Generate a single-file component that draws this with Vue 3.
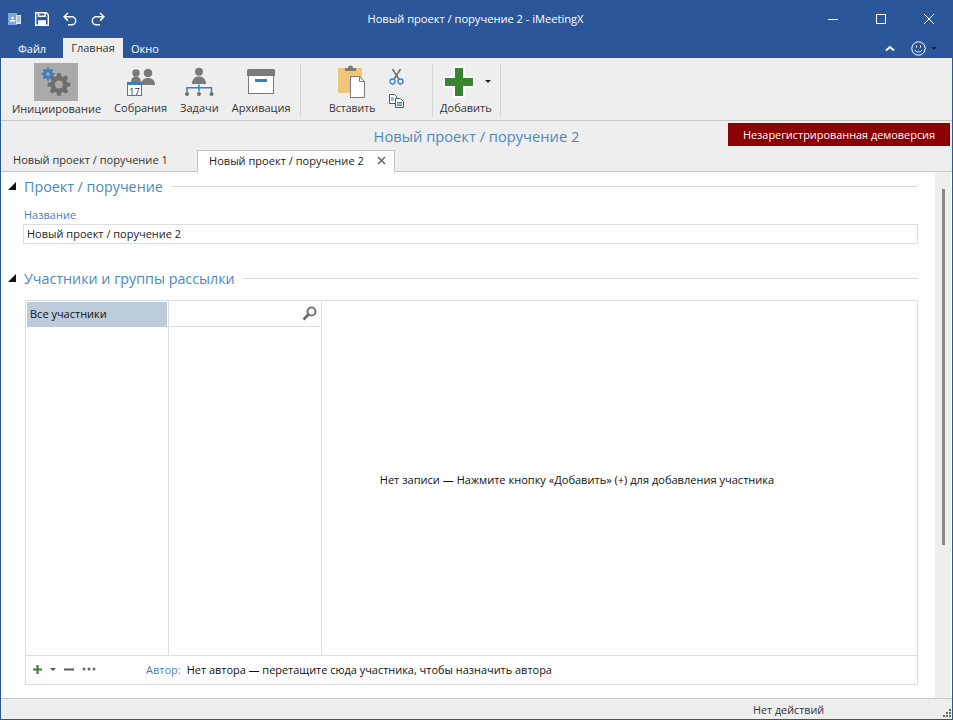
<script setup>
// Шестерёнка для кнопки «Инициирование»
const gear = (cx, cy, outer, inner, hole, teeth) => {
  let d = '';
  const step = (Math.PI * 2) / teeth;
  for (let i = 0; i < teeth; i++) {
    const a = i * step;
    const pts = [
      [inner, a - step * 0.36],
      [outer, a - step * 0.2],
      [outer, a + step * 0.2],
      [inner, a + step * 0.36],
    ];
    pts.forEach(([r, t], j) => {
      const x = (cx + r * Math.cos(t)).toFixed(2);
      const y = (cy + r * Math.sin(t)).toFixed(2);
      d += `${i === 0 && j === 0 ? 'M' : 'L'}${x} ${y}`;
    });
  }
  d += `ZM${cx + hole} ${cy}A${hole} ${hole} 0 1 0 ${cx - hole} ${cy}A${hole} ${hole} 0 1 0 ${cx + hole} ${cy}Z`;
  return d;
};

const smallGear = gear(14, 11, 6.5, 4.6, 1.8, 8);
const bigGear = gear(25, 21.5, 11.5, 8.5, 4, 8);
</script>

<template>
  <div class="window">
    <header class="titlebar">
      <div class="quick">
        <svg class="app-icon" width="13" height="14" viewBox="0 0 13 14">
          <rect x="0" y="1" width="9" height="12" fill="#7fa6d6" />
          <rect x="8" y="3" width="5" height="9" fill="#dfe7f2" />
          <circle cx="4.500" cy="6" r="1.200" fill="#fff" />
          <rect x="2" y="8" width="5" height="1.600" fill="#fff" />
          <path d="M9 5h3M9 7h3M9 9h3" stroke="#7f9cc4" />
        </svg>
        <svg width="14" height="14" viewBox="0 0 14 14" fill="none" stroke="#fff" stroke-width="1.400">
          <path d="M.7.7h10.600l2 2v10.600H.7z" />
          <path d="M3.500 .7v3.600h6.500V.7" />
          <path d="M3 13.300V8.200h8v5.100" fill="#fff" stroke="none" />
        </svg>
        <svg width="14" height="14" viewBox="0 0 14 14" fill="none" stroke="#fff" stroke-width="1.500">
          <path d="M5 1 1.100 4.800 5 8.600" />
          <path d="M1.300 4.800h7.400a4 4 0 0 1 0 8H5" />
        </svg>
        <svg width="14" height="14" viewBox="0 0 14 14" fill="none" stroke="#fff" stroke-width="1.500">
          <path d="m9 1 3.900 3.800L9 8.600" />
          <path d="M12.700 4.800H5.300a4 4 0 0 0 0 8H9" />
        </svg>
      </div>
      <div class="title">Новый проект / поручение 2 - iMeetingX</div>
      <div class="win-controls">
        <svg width="10" height="10" viewBox="0 0 10 10"><path d="M0 5.500h10" stroke="#fff" /></svg>
        <svg width="10" height="10" viewBox="0 0 10 10"><rect x=".5" y=".5" width="9" height="9" fill="none" stroke="#fff" /></svg>
        <svg width="10" height="10" viewBox="0 0 10 10"><path d="m0 0 10 10M10 0 0 10" stroke="#fff" /></svg>
      </div>
    </header>

    <nav class="menubar">
      <span class="menu-item file">Файл</span>
      <span class="menu-item active">Главная</span>
      <span class="menu-item">Окно</span>
      <div class="menu-right">
        <svg width="10" height="7" viewBox="0 0 10 7"><path d="M1 5.500 5 2l4 3.500" fill="none" stroke="#fff" stroke-width="2" /></svg>
        <svg class="smile" width="15" height="15" viewBox="0 0 15 15" fill="none" stroke="#fff">
          <circle cx="7.500" cy="7.500" r="6.700" />
          <path d="M4 9c1 2.600 6 2.600 7 0" />
          <path d="M5.500 4.500v2M9.500 4.500v2" />
        </svg>
        <i class="caret dark"></i>
      </div>
    </nav>

    <section class="ribbon">
      <div class="group first">
        <button class="rb selected">
          <span class="rb-icon hl">
            <svg width="44" height="38" viewBox="0 0 44 38">
              <path :d="smallGear" fill="#3f7cbd" fill-rule="evenodd" />
              <path :d="bigGear" fill="#6e6e6e" fill-rule="evenodd" />
            </svg>
          </span>
          <span class="rb-label">Инициирование</span>
        </button>
        <button class="rb">
          <span class="rb-icon">
            <svg width="34" height="32" viewBox="0 0 34 32">
              <circle cx="12" cy="7" r="3.700" fill="#7a7a7a" />
              <circle cx="24" cy="7" r="4.300" fill="#7a7a7a" />
              <path d="M7 17c0-5 2-6.500 5-6.500s5 1.500 5 6.500z" fill="#7a7a7a" />
              <path d="M17 19c0-5 3-7 7-7s7 2 7 7z" fill="#7a7a7a" />
              <rect x="3.500" y="16.500" width="14" height="13" fill="#fff" stroke="#3f7cbd" />
              <rect x="3" y="16" width="15" height="3" fill="#3f7cbd" />
              <text x="10.500" y="28.500" class="cal">17</text>
            </svg>
          </span>
          <span class="rb-label">Собрания</span>
        </button>
        <button class="rb">
          <span class="rb-icon">
            <svg width="30" height="32" viewBox="0 0 30 32">
              <circle cx="15" cy="5.700" r="4" fill="#7a7a7a" />
              <path d="M8 18c0-5 3-7.500 7-7.500s7 2.500 7 7.500z" fill="#7a7a7a" />
              <path d="M15 18.500v7M3 26v-4.300h24.500V26" fill="none" stroke="#3f7cbd" stroke-width="1.500" />
              <circle cx="3" cy="28" r="2" fill="#6e6e6e" />
              <circle cx="15" cy="28" r="2" fill="#6e6e6e" />
              <circle cx="27.500" cy="28" r="2" fill="#6e6e6e" />
            </svg>
          </span>
          <span class="rb-label">Задачи</span>
        </button>
        <button class="rb">
          <span class="rb-icon">
            <svg width="30" height="32" viewBox="0 0 30 32">
              <path d="M1 10V4.500Q1 3 2.500 3h25Q29 3 29 4.500V10z" fill="#7a7a7a" />
              <rect x="2.500" y="9.500" width="25" height="18" fill="#fff" stroke="#7a7a7a" />
              <rect x="9" y="13" width="12" height="3" fill="#3f7cbd" />
            </svg>
          </span>
          <span class="rb-label">Архивация</span>
        </button>
      </div>

      <div class="group second">
        <button class="rb">
          <span class="rb-icon">
            <svg width="30" height="34" viewBox="0 0 30 34">
              <rect x="1" y="3" width="24" height="25" rx="1.500" fill="#efc67a" />
              <path d="M8 6V3h3a2.500 2.500 0 0 1 5 0h3v3z" fill="#7a7a7a" />
              <path d="M13.500 11.500h9l5 5v16h-14z" fill="#fff" stroke="#7a7a7a" />
              <path d="M22.500 11.500v5h5" fill="none" stroke="#7a7a7a" />
            </svg>
          </span>
          <span class="rb-label paste">Вставить</span>
        </button>
        <div class="small-tools">
          <svg width="15" height="16" viewBox="0 0 15 16" fill="none">
            <path d="M3.500 0 9.800 10M11.500 0 5.200 10" stroke="#6e6e6e" stroke-width="1.600" />
            <circle cx="3.500" cy="12.500" r="2.500" stroke="#3f7cbd" stroke-width="1.300" />
            <circle cx="11.500" cy="12.500" r="2.500" stroke="#3f7cbd" stroke-width="1.300" />
          </svg>
          <svg width="15" height="14" viewBox="0 0 15 14">
            <path d="M.5.500h5l2 2v7h-7z" fill="#fff" stroke="#555" />
            <path d="M6.500 4.500h5l3 3v6h-8z" fill="#fff" stroke="#555" />
            <path d="M8 8.500h5M8 10h5M8 11.500h5M2 4h3M2 6h3" stroke="#3f7cbd" />
          </svg>
        </div>
      </div>

      <div class="group third">
        <button class="rb add">
          <span class="rb-icon">
            <svg width="32" height="32" viewBox="0 0 32 32">
              <path d="M11 1h10v10h10v10H21v10H11V21H1V11h10z" fill="#388433" stroke="#fff" stroke-width="2" />
            </svg>
            <i class="caret dark add-caret"></i>
          </span>
          <span class="rb-label">Добавить</span>
        </button>
      </div>
    </section>

    <div class="doc-band">
      <span class="doc-title">Новый проект / поручение 2</span>
      <span class="demo">Незарегистрированная демоверсия</span>
    </div>

    <div class="tabs">
      <span class="tab">Новый проект / поручение 1</span>
      <span class="tab current">
        Новый проект / поручение 2
        <svg width="9" height="9" viewBox="0 0 9 9"><path d="m1 1 7 7M8 1 1 8" stroke="#666" stroke-width="1.500" /></svg>
      </span>
    </div>

    <main class="content">
      <div class="form">
        <div class="section-head">
          <i class="tri"></i>
          <h2>Проект / поручение</h2>
          <span class="rule"></span>
        </div>
        <label class="field-label">Название</label>
        <div class="input">Новый проект / поручение 2</div>

        <div class="section-head second-head">
          <i class="tri"></i>
          <h2>Участники и группы рассылки</h2>
          <span class="rule"></span>
        </div>

        <div class="panel">
          <div class="panel-cols">
            <div class="col groups">
              <div class="group-item">Все участники</div>
            </div>
            <div class="col people">
              <div class="search">
                <svg width="15" height="15" viewBox="0 0 15 15" fill="none">
                  <circle cx="9.500" cy="5.500" r="4" stroke="#777" stroke-width="2.100" />
                  <path d="M6.500 8.500 1.500 13.500" stroke="#666" stroke-width="2.600" />
                </svg>
              </div>
            </div>
            <div class="col empty">Нет записи — Нажмите кнопку «Добавить» (+) для добавления участника</div>
          </div>
          <div class="panel-foot">
            <div class="foot-tools">
              <svg width="9" height="9" viewBox="0 0 9 9"><path d="M4.500 0v9M0 4.500h9" stroke="#388433" stroke-width="2.200" /></svg>
              <i class="caret gray"></i>
              <svg width="10" height="9" viewBox="0 0 10 9"><path d="M0 4.500h10" stroke="#555" stroke-width="2" /></svg>
              <svg class="dots" width="14" height="4" viewBox="0 0 14 4" fill="#666">
                <circle cx="2" cy="2" r="1.500" /><circle cx="7" cy="2" r="1.500" /><circle cx="12" cy="2" r="1.500" />
              </svg>
            </div>
            <span class="author-label">Автор:</span>
            <span class="author">Нет автора — перетащите сюда участника, чтобы назначить автора</span>
          </div>
        </div>
      </div>
      <div class="scrollbar"><span class="thumb"></span></div>
    </main>

    <footer class="status">
      <span>Нет действий</span>
      <svg class="grip" width="9" height="9" viewBox="0 0 9 9" fill="#666">
        <rect x="6" y="0" width="2" height="2" /><rect x="3" y="3" width="2" height="2" /><rect x="6" y="3" width="2" height="2" />
        <rect x="0" y="6" width="2" height="2" /><rect x="3" y="6" width="2" height="2" /><rect x="6" y="6" width="2" height="2" />
      </svg>
    </footer>
  </div>
</template>

<style>
html,
body {
  margin: 0;
  background: #2b579a;
}
</style>

<style scoped>
.window {
  width: 953px;
  height: 720px;
  box-sizing: border-box;
  display: flex;
  flex-direction: column;
  border: 1px solid #2b579a;
  border-top: 0;
  background: #fff;
  font-family: "Open Sans", "Noto Sans", sans-serif;
  font-size: 11px;
  color: #333;
  overflow: hidden;
}

.titlebar {
  height: 38px;
  background: #2b579a;
  display: flex;
  align-items: center;
  position: relative;
  flex: none;
}

.quick {
  display: flex;
  align-items: center;
  gap: 14px;
  padding-left: 7px;
}

.title {
  position: absolute;
  left: 0;
  right: 0;
  top: 11px;
  text-align: center;
  color: #fff;
  font-size: 11.1px;
  padding-right: 2px;
}

.win-controls {
  margin-left: auto;
  display: flex;
  gap: 38px;
  padding-right: 18px;
}

.menubar {
  height: 20px;
  flex: none;
  background: #2b579a;
  display: flex;
  color: #fff;
  padding-left: 17px;
}

.menu-item {
  line-height: 22px;
}

.menu-item.file {
  width: 45px;
}

.menu-item.active {
  width: 60px;
  background: #eee;
  color: #333;
  text-align: center;
  margin-right: 8px;
  margin-top: -1px;
  height: 21px;
}

.menu-right {
  margin-left: auto;
  display: flex;
  align-items: center;
  padding-right: 15px;
}

.smile {
  margin-left: 16px;
  margin-right: 5px;
}

.caret {
  display: inline-block;
  width: 0;
  height: 0;
  border-left: 3px solid transparent;
  border-right: 3px solid transparent;
  border-top: 3px solid #222;
}

.caret.gray {
  border-top-color: #555;
}

.ribbon {
  height: 63px;
  flex: none;
  box-sizing: border-box;
  background: #eee;
  border-bottom: 1px solid #c6c6c6;
  display: flex;
}

.group {
  display: flex;
  margin: 6px 0 3px;
  border-right: 1px solid #d4d4d4;
}

.group.first {
  width: 300px;
  padding-left: 5px;
  gap: 1px;
  box-sizing: border-box;
}

.group.second {
  width: 132px;
  box-sizing: border-box;
  padding-left: 22px;
}

.group.third {
  width: 68px;
  box-sizing: border-box;
  padding-left: 1px;
}

.rb {
  border: 0;
  background: none;
  padding: 0 6px;
  font: inherit;
  color: inherit;
  display: flex;
  flex-direction: column;
  align-items: center;
}

.rb-icon {
  height: 36px;
  display: flex;
  align-items: center;
  justify-content: center;
  position: relative;
}

.rb-icon.hl {
  background: #aaa;
  height: 38px;
  width: 44px;
  margin: -1px 1px 0 0;
}

.rb-label {
  white-space: nowrap;
  line-height: 15px;
}

.rb-label.paste {
  font-size: 10.5px;
  line-height: 16px;
}

.add .rb-icon {
  align-self: flex-start;
  margin-left: 3px;
}

.cal {
  font-size: 9.5px;
  font-family: "Open Sans", sans-serif;
  fill: #333;
  text-anchor: middle;
}

.small-tools {
  display: flex;
  flex-direction: column;
  gap: 9px;
  padding: 5px 0 0 8px;
}

.add-caret {
  position: absolute;
  left: 42px;
  top: 16px;
}

.doc-band {
  height: 29px;
  flex: none;
  background: #eee;
  display: flex;
  align-items: center;
  justify-content: center;
  position: relative;
}

.doc-title {
  color: #4a8abf;
  font-size: 14.7px;
}

.demo {
  position: absolute;
  right: 2px;
  top: 2px;
  width: 222px;
  height: 23px;
  line-height: 23px;
  background: #8b0000;
  color: #fff;
  text-align: center;
  font-size: 10.9px;
}

.tabs {
  height: 22px;
  flex: none;
  box-sizing: border-box;
  background: #eee;
  border-bottom: 1px solid #c6c6c6;
  display: flex;
  padding-left: 12px;
}

.tab {
  line-height: 20px;
  width: 184px;
  font-size: 11.05px;
}

.tab.current {
  width: 198px;
  height: 22px;
  box-sizing: border-box;
  background: #fff;
  border: 1px solid #c6c6c6;
  border-bottom: 0;
  padding: 0 0 2px 11px;
  display: flex;
  align-items: center;
  gap: 13px;
  color: #222;
  white-space: nowrap;
}

.content {
  flex: 1;
  min-height: 0;
  display: flex;
  background: #fff;
}

.form {
  flex: 1;
  padding: 4px 17px 0 7px;
  min-width: 0;
}

.section-head {
  display: flex;
  align-items: center;
  height: 20px;
}

.second-head {
  margin-top: 24px;
}

.tri {
  width: 0;
  height: 0;
  border-left: 8px solid transparent;
  border-bottom: 8px solid #111;
  margin-right: 8px;
}

.section-head h2 {
  margin: 0;
  font-weight: 400;
  font-size: 14.3px;
  color: #4a8abf;
}

.rule {
  flex: 1;
  height: 1px;
  background: #d8d8d8;
  margin-left: 8px;
}

.field-label {
  display: block;
  margin: 12px 0 0 16px;
  color: #4a82bb;
  line-height: 14px;
}

.input {
  margin: 2px 0 0 15px;
  height: 20px;
  line-height: 18px;
  box-sizing: border-box;
  border: 1px solid #ddd;
  padding-left: 3px;
  color: #222;
}

.panel {
  margin: 12px 0 0 17px;
  height: 385px;
  box-sizing: border-box;
  border: 1px solid #ddd;
  display: flex;
  flex-direction: column;
}

.panel-cols {
  flex: 1;
  min-height: 0;
  display: flex;
}

.col.groups {
  width: 143px;
  box-sizing: border-box;
  border-right: 1px solid #ddd;
  padding: 1px 0 0 1px;
}

.group-item {
  height: 25px;
  width: 140px;
  background: #bdccdb;
  line-height: 24px;
  padding-left: 3px;
  box-sizing: border-box;
  color: #111;
}

.col.people {
  width: 153px;
  box-sizing: border-box;
  border-right: 1px solid #ddd;
  padding: 0 1px;
}

.search {
  height: 26px;
  box-sizing: border-box;
  border-bottom: 1px solid #ddd;
  display: flex;
  justify-content: flex-end;
  align-items: center;
  padding-right: 3px;
}

.col.empty {
  flex: 1;
  display: flex;
  align-items: center;
  justify-content: center;
  padding: 3px 85px 0 0;
  font-size: 11.05px;
  color: #111;
}

.panel-foot {
  height: 29px;
  flex: none;
  box-sizing: border-box;
  border-top: 1px solid #ddd;
  padding-bottom: 2px;
  display: flex;
  align-items: center;
}

.foot-tools {
  width: 120px;
  padding-left: 7px;
  box-sizing: border-box;
  display: flex;
  align-items: center;
  gap: 8px;
}

.author-label {
  color: #4a82bb;
  margin-right: 6px;
}

.author {
  color: #111;
  font-size: 10.95px;
}

.scrollbar {
  width: 16px;
  margin-right: 1px;
  flex: none;
  background: #eee;
  display: flex;
  justify-content: center;
  padding-top: 17px;
  box-sizing: border-box;
}

.thumb {
  width: 3px;
  height: 356px;
  background: #8a8a8a;
}

.status {
  height: 21px;
  flex: none;
  box-sizing: border-box;
  background: #eee;
  border-top: 1px solid #c6c6c6;
  display: flex;
  align-items: center;
  padding-left: 752px;
  font-size: 10.8px;
  position: relative;
}

.grip {
  position: absolute;
  right: 0;
  bottom: 1px;
}
</style>
